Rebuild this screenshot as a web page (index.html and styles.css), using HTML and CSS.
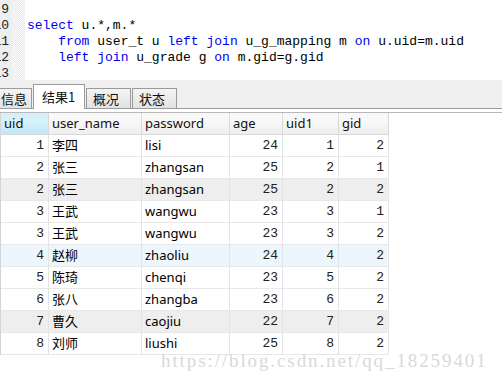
FILE: index.html
```html
<!DOCTYPE html>
<html lang="zh-CN">
<head>
    <meta charset="UTF-8">
    <title>查询结果</title>
    <link rel="stylesheet" href="styles.css">
</head>
<body>
<div class="editor">
    <div class="gutter">
        <div class="nums">
            <div class="num"><span>9</span></div>
            <div class="num"><span>10</span></div>
            <div class="num"><span>11</span></div>
            <div class="num"><span>12</span></div>
            <div class="num"><span>13</span></div>
        </div>
        <div class="fold"></div>
    </div>
    <pre class="code">

<span class="kw">select</span> u.*,m.*
    <span class="kw">from</span> user_t u <span class="kw">left</span> <span class="kw">join</span> u_g_mapping m <span class="kw">on</span> u.uid=m.uid
    <span class="kw">left</span> <span class="kw">join</span> u_grade g <span class="kw">on</span> m.gid=g.gid
</pre>
</div>

<div class="tabs">
    <div class="tab first">信息</div>
    <div class="tab active">结果1</div>
    <div class="tab">概况</div>
    <div class="tab">状态</div>
</div>

<div class="result">
    <div class="grid">
        <div class="th sel">uid</div>
        <div class="th">user_name</div>
        <div class="th">password</div>
        <div class="th">age</div>
        <div class="th">uid1</div>
        <div class="th">gid</div>

        <div class="row"><div class="td num">1</div><div class="td">李四</div><div class="td">lisi</div><div class="td num">24</div><div class="td num">1</div><div class="td num">2</div></div>
        <div class="row"><div class="td num">2</div><div class="td">张三</div><div class="td">zhangsan</div><div class="td num">25</div><div class="td num">2</div><div class="td num">1</div></div>
        <div class="row gray"><div class="td num">2</div><div class="td">张三</div><div class="td">zhangsan</div><div class="td num">25</div><div class="td num">2</div><div class="td num">2</div></div>
        <div class="row"><div class="td num">3</div><div class="td">王武</div><div class="td">wangwu</div><div class="td num">23</div><div class="td num">3</div><div class="td num">1</div></div>
        <div class="row"><div class="td num">3</div><div class="td">王武</div><div class="td">wangwu</div><div class="td num">23</div><div class="td num">3</div><div class="td num">2</div></div>
        <div class="row hover"><div class="td num">4</div><div class="td">赵柳</div><div class="td">zhaoliu</div><div class="td num">24</div><div class="td num">4</div><div class="td num">2</div></div>
        <div class="row"><div class="td num">5</div><div class="td">陈琦</div><div class="td">chenqi</div><div class="td num">23</div><div class="td num">5</div><div class="td num">2</div></div>
        <div class="row"><div class="td num">6</div><div class="td">张八</div><div class="td">zhangba</div><div class="td num">23</div><div class="td num">6</div><div class="td num">2</div></div>
        <div class="row gray"><div class="td num">7</div><div class="td">曹久</div><div class="td">caojiu</div><div class="td num">22</div><div class="td num">7</div><div class="td num">2</div></div>
        <div class="row"><div class="td num">8</div><div class="td">刘师</div><div class="td">liushi</div><div class="td num">25</div><div class="td num">8</div><div class="td num">2</div></div>
    </div>
</div>

<div class="watermark">https://blog.csdn.net/qq_18259401</div>
</body>
</html>
```

FILE: styles.css
```css
body {
    margin: 0;
    background: #fff;
    font-family: "Noto Sans", "Noto Sans CJK SC", sans-serif;
    font-size: 13px;
    color: #000;
    position: relative;
    width: 502px;
    height: 381px;
    overflow: hidden;
}

/* sql editor */
.editor {
    display: flex;
    height: 80px;
    background: #fff;
    overflow: hidden;
}

.gutter {
    display: flex;
    width: 25px;
    flex-shrink: 0;
}

.nums {
    width: 12px;
    padding-top: 2px;
    background: #eeeeee;
    overflow: hidden;
}

.num {
    display: flex;
    justify-content: flex-end;
    height: 16px;
    line-height: 16px;
    padding-right: 3px;
    font-family: "Liberation Mono", monospace;
    font-size: 13px;
    color: #222;
    white-space: nowrap;
}

.fold {
    flex: 1;
    background-image: conic-gradient(#e6e6e6 25%, #fff 0 50%, #e6e6e6 0 75%, #fff 0);
    background-size: 2px 2px;
}

.code {
    flex: 1;
    margin: 0;
    padding: 2px 0 0 2px;
    border-top: 1px solid #a8a8a8;
    margin-top: -1px;
    font-family: "Liberation Mono", monospace;
    font-size: 13px;
    line-height: 16px;
}

.kw {
    color: #0000f0;
}

/* tabs */
.tabs {
    display: flex;
    align-items: flex-end;
    height: 28px;
    background: #f0f0f0;
    border-bottom: 1px solid #9c9c9c;
    font-family: "Noto Sans CJK SC", sans-serif;
    font-size: 13px;
}

.tab {
    box-sizing: border-box;
    height: 20px;
    width: 45px;
    margin-right: 1px;
    padding-left: 6px;
    line-height: 19px;
    border: 1px solid #9a9a9a;
    border-bottom: none;
    background: linear-gradient(#f4f4f4, #e3e3e3);
    color: #111;
}

.tab.first {
    width: 38px;
    margin-left: -6px;
}

.tab.active {
    width: 52px;
    height: 25px;
    margin-bottom: -1px;
    padding-left: 8px;
    line-height: 23px;
    background: #fff;
}

/* result grid */
.result {
    margin-top: 3px;
    border-top: 1px solid #b8b8b8;
}

.grid {
    display: grid;
    grid-template-columns: 48px 93px 88px 53px 56px 50px;
    width: 389px;
    border-left: 1px solid #d4d4d4;
}

.row {
    display: contents;
}

.th,
.td {
    box-sizing: border-box;
    height: 22px;
    line-height: 21px;
    padding: 0 4px 0 3px;
    border-right: 1px solid #e4e4e4;
    border-bottom: 1px solid #e8e8e8;
    white-space: nowrap;
    overflow: hidden;
}

.th {
    background: linear-gradient(#f8f8f8 40%, #eeeeee);
    border-right-color: #d8d8d8;
    border-bottom-color: #d8d8d8;
    color: #111;
}

.th.sel {
    background: linear-gradient(#d6f1fc 40%, #bfe7f8);
}

.td.num {
    text-align: right;
}

.row.gray .td {
    background: #eeeeee;
}

.row.hover .td {
    background: #edf5fd;
}

.watermark {
    position: absolute;
    left: 161px;
    top: 350px;
    font-family: "Liberation Serif", serif;
    font-size: 19px;
    letter-spacing: 1.9px;
    color: #d9d9d9;
    white-space: nowrap;
}
```
